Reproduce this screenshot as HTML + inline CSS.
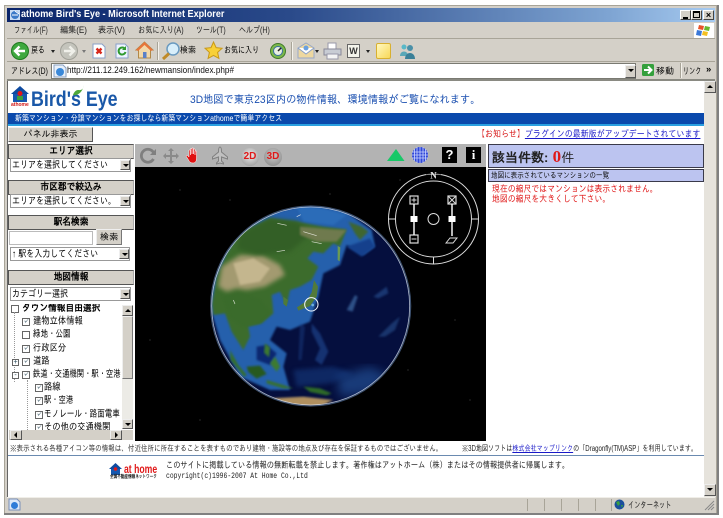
<!DOCTYPE html>
<html><head><meta charset="utf-8"><style>
html,body{margin:0;padding:0;width:723px;height:518px;overflow:hidden;background:#fff}
body{position:relative;font-family:"Liberation Sans","IPAGothic","Noto Sans CJK JP",sans-serif;font-size:10px;color:#000}
#w{position:absolute;left:0;top:0;width:723px;height:518px;overflow:hidden;filter:blur(.3px)}
.a,.t{position:absolute}
.t{white-space:nowrap;line-height:12px;transform-origin:0 0}
.h{position:absolute;left:8px;width:124px;height:13px;background:#d4d0c8;border:1px solid #555;border-right-color:#aaa;text-align:center;font-weight:bold;font-size:10px;line-height:13px;white-space:nowrap;overflow:hidden}
.h span{display:inline-block;transform:scaleX(.87)}
.s{position:absolute;left:10px;height:14px;background:#fff;border:1px solid #999;box-sizing:border-box;font-size:10px;line-height:12px;padding-left:1px;white-space:nowrap;overflow:hidden}
.s span{display:inline-block;transform:scaleX(.8);transform-origin:0 0;position:relative;top:1px}
.ar{position:absolute;width:11px;height:11px;background:#d4d0c8;border:1px solid;border-color:#eee #555 #555 #eee;box-sizing:border-box}
.ar:after{content:"";position:absolute;left:2px;top:3px;border-left:3px solid transparent;border-right:3px solid transparent;border-top:3px solid #000}
.up:after{border-top:0;border-bottom:3px solid #000}
.cb{position:absolute;width:6px;height:6px;border:1px solid #666;background:#fff;font-size:7px;line-height:6px;text-align:center;color:#245;overflow:hidden}
.tr{position:absolute;font-size:10px;line-height:12px;white-space:nowrap;transform:scaleX(.83);transform-origin:0 0}
.sep{position:absolute;width:1px;background:#a8a498;border-right:1px solid #f4f2ec}
</style></head><body><div id="w">

<!-- window frame -->
<div class="a" style="left:4px;top:5px;width:713px;height:509px;background:#d4d0c8;border:1px solid #a8a498;box-sizing:border-box"></div>
<div class="a" style="left:717px;top:5px;width:2px;height:509px;background:#808080"></div>
<div class="a" style="left:4px;top:513px;width:715px;height:2px;background:#808080"></div>

<!-- title bar -->
<div class="a" style="left:7px;top:8px;width:708px;height:14px;background:linear-gradient(90deg,#0a246a 0%,#2a4a8a 40%,#7ea4d2 85%,#a6caf0 100%)"></div>
<svg class="a" style="left:9px;top:9px" width="12" height="12" viewBox="0 0 12 12"><rect x="1" y="1" width="10" height="10" fill="#c8dcf4"/><circle cx="6" cy="6" r="4" fill="#3a7ac8"/><path d="M3 6h6M6 2l4 3" stroke="#fff" fill="none"/></svg>
<div class="t" style="left:21px;top:9px;color:#fff;font-weight:bold;font-size:10px;transform:scaleX(.91)">athome Bird's Eye - Microsoft Internet Explorer</div>
<div class="a" style="left:680px;top:10px;width:11px;height:10px;background:#d4d0c8;border:1px solid;border-color:#fff #444 #444 #fff;box-sizing:border-box"><div class="a" style="left:2px;top:6px;width:5px;height:2px;background:#000"></div></div>
<div class="a" style="left:691px;top:10px;width:11px;height:10px;background:#d4d0c8;border:1px solid;border-color:#fff #444 #444 #fff;box-sizing:border-box"><div class="a" style="left:1px;top:0;width:5px;height:4px;border:1px solid #000;border-top-width:2px"></div></div>
<div class="a" style="left:703px;top:10px;width:11px;height:10px;background:#d4d0c8;border:1px solid;border-color:#fff #444 #444 #fff;box-sizing:border-box;font-size:9px;line-height:8px;text-align:center;font-weight:bold">×</div>

<!-- menu -->
<div class="t" style="left:14px;top:24px;font-size:9px;color:#222;transform:scaleX(.71)">ファイル(F)</div>
<div class="t" style="left:60px;top:24px;font-size:9px;color:#222;transform:scaleX(.9)">編集(E)</div>
<div class="t" style="left:98px;top:24px;font-size:9px;color:#222;transform:scaleX(.9)">表示(V)</div>
<div class="t" style="left:138px;top:24px;font-size:9px;color:#222;transform:scaleX(.8)">お気に入り(A)</div>
<div class="t" style="left:196px;top:24px;font-size:9px;color:#222;transform:scaleX(.77)">ツール(T)</div>
<div class="t" style="left:239px;top:24px;font-size:9px;color:#222;transform:scaleX(.78)">ヘルプ(H)</div>
<div class="a" style="left:7px;top:38px;width:708px;height:1px;background:#a8a498"></div>
<div class="a" style="left:694px;top:23px;width:20px;height:15px;background:#fff"></div>
<svg class="a" style="left:696px;top:24px" width="15" height="13" viewBox="0 0 15 13"><path d="M3 1l5 1-1 4-5-1z" fill="#e8542a"/><path d="M9 2l5 1-1 4-5-1z" fill="#6ab82e"/><path d="M1 6l5 1-1 5-5-1z" fill="#3a78d8"/><path d="M7 7l5 1-1 4-5-1z" fill="#f4c020"/></svg>

<!-- toolbar -->
<svg class="a" style="left:10px;top:41px" width="20" height="20" viewBox="0 0 20 20"><circle cx="10" cy="10" r="8.500" fill="#3fa83f" stroke="#1f7a1f"/><path d="M15 10H6M9.500 5.500L5 10l4.500 4.500" stroke="#fff" stroke-width="2.400" fill="none"/></svg>
<div class="t" style="left:31px;top:44px;font-size:9px;transform:scaleX(.77)">戻る</div>
<div class="a" style="left:51px;top:50px;border-left:2px solid transparent;border-right:2px solid transparent;border-top:3px solid #222"></div>
<svg class="a" style="left:59px;top:41px" width="20" height="20" viewBox="0 0 20 20"><circle cx="10" cy="10" r="8.500" fill="#c4c4bc" stroke="#a0a098"/><path d="M5 10h9M10.500 5.500L15 10l-4.500 4.500" stroke="#f0f0ea" stroke-width="2.400" fill="none"/></svg>
<div class="a" style="left:82px;top:50px;border-left:2px solid transparent;border-right:2px solid transparent;border-top:3px solid #777"></div>
<svg class="a" style="left:91px;top:43px" width="16" height="16" viewBox="0 0 16 16"><path d="M2 1h9l3 3v11H2z" fill="#fff" stroke="#8aa0c8"/><path d="M5.500 5.500l5 5M10.500 5.500l-5 5" stroke="#d8281c" stroke-width="2.400"/></svg>
<svg class="a" style="left:114px;top:43px" width="16" height="16" viewBox="0 0 16 16"><path d="M2 1h9l3 3v11H2z" fill="#eef4ff" stroke="#8aa0c8"/><path d="M11 6a3.500 3.500 0 1 0 .5 3" stroke="#2f9a2f" stroke-width="2" fill="none"/><path d="M12 3v4H8z" fill="#2f9a2f"/></svg>
<svg class="a" style="left:135px;top:41px" width="19" height="19" viewBox="0 0 19 19"><path d="M9.500 1L1 9h2.500v8h12V9H18z" fill="#f2d8a8" stroke="#b08848"/><path d="M9.500 1L1 9l2 1 6.500-6 6.500 6 2-1z" fill="#e8743a"/><rect x="8" y="11" width="3.500" height="6" fill="#5a80c8"/></svg>
<div class="sep" style="left:157px;top:42px;height:18px"></div>
<svg class="a" style="left:161px;top:41px" width="20" height="20" viewBox="0 0 20 20"><circle cx="12" cy="8" r="6" fill="#d8eefa" stroke="#6a9ac0" stroke-width="1.500"/><path d="M8 12.500L2 18" stroke="#c08a28" stroke-width="3"/></svg>
<div class="t" style="left:180px;top:44px;font-size:9px;transform:scaleX(.88)">検索</div>
<svg class="a" style="left:204px;top:41px" width="19" height="19" viewBox="0 0 19 19"><path d="M9.500 1l2.600 5.600 6 .7-4.500 4.100 1.300 6L9.500 14.400 4.100 17.400l1.300-6L1 7.300l6-.7z" fill="#f8d038" stroke="#c89818"/></svg>
<div class="t" style="left:224px;top:44px;font-size:9px;transform:scaleX(.78)">お気に入り</div>
<svg class="a" style="left:269px;top:42px" width="18" height="18" viewBox="0 0 18 18"><circle cx="9" cy="9" r="7.500" fill="#7cb84a" stroke="#3f7a2a"/><circle cx="9" cy="9" r="4.500" fill="#e8f0e0" stroke="#3b6ca8"/><path d="M9 9l3-3" stroke="#222" stroke-width="1.500"/></svg>
<div class="sep" style="left:291px;top:42px;height:18px"></div>
<svg class="a" style="left:297px;top:42px" width="18" height="17" viewBox="0 0 18 17"><path d="M1 6l8-5 8 5v10H1z" fill="#eed8a0" stroke="#98a8c8"/><path d="M1 6l8 6 8-6" fill="#fff" stroke="#88a0c8"/><circle cx="9" cy="6" r="2.500" fill="#6aa0e0"/></svg>
<div class="a" style="left:315px;top:50px;border-left:2px solid transparent;border-right:2px solid transparent;border-top:3px solid #222"></div>
<svg class="a" style="left:323px;top:42px" width="19" height="18" viewBox="0 0 19 18"><path d="M5 1h8v6H5z" fill="#fff" stroke="#99a"/><path d="M1 7h17v6H1z" fill="#c8ccd4" stroke="#889"/><path d="M4 12h11v5H4z" fill="#f4f4f4" stroke="#99a"/></svg>
<div class="a" style="left:347px;top:44px;width:13px;height:14px;background:#f4f4ec;border:1px solid #666;box-sizing:border-box;font-size:9px;line-height:12px;text-align:center;font-weight:bold;color:#333">W</div>
<div class="a" style="left:366px;top:50px;border-left:2px solid transparent;border-right:2px solid transparent;border-top:3px solid #222"></div>
<div class="a" style="left:376px;top:43px;width:15px;height:16px;background:linear-gradient(135deg,#fff8c0,#f8d858);border:1px solid #d8b030;border-radius:2px;box-sizing:border-box"></div>
<svg class="a" style="left:398px;top:42px" width="18" height="18" viewBox="0 0 18 18"><circle cx="6" cy="5" r="2.500" fill="#58b8c8"/><path d="M2 14c0-6 8-6 8 0z" fill="#58a8b8"/><circle cx="12" cy="6" r="3" fill="#4a90a8"/><path d="M7 17c0-8 10-8 10 0z" fill="#3a8098"/></svg>
<div class="a" style="left:7px;top:61px;width:708px;height:1px;background:#a8a498"></div>

<!-- address bar -->
<div class="t" style="left:11px;top:65px;font-size:9px;transform:scaleX(.76)">アドレス(D)</div>
<div class="a" style="left:51px;top:63px;width:585px;height:16px;background:#fff;border:1px solid #7a7a72;box-sizing:border-box"></div>
<svg class="a" style="left:53px;top:64px" width="14" height="14" viewBox="0 0 14 14"><path d="M1 1h9l3 3v9H1z" fill="#e8f0fa" stroke="#8aa0c0"/><circle cx="7" cy="8" r="4" fill="#3a88d8"/></svg>
<div class="t" style="left:67px;top:65px;font-size:9.500px;color:#111;transform:scaleX(.86)">http://211.12.249.162/newmansion/index.php#</div>
<div class="ar" style="left:625px;top:65px;width:11px;height:13px"></div>
<svg class="a" style="left:641px;top:63px" width="14" height="14" viewBox="0 0 14 14"><rect x="1" y="1" width="12" height="12" rx="1.500" fill="#34a03c"/><path d="M3 7h7M7 3.500L10.500 7 7 10.500" stroke="#fff" stroke-width="2" fill="none"/></svg>
<div class="t" style="left:656px;top:65px;font-size:9px">移動</div>
<div class="sep" style="left:680px;top:63px;height:15px"></div>
<div class="t" style="left:683px;top:65px;font-size:9px;transform:scaleX(.68)">リンク</div>
<div class="t" style="left:706px;top:64px;font-size:9.500px;font-weight:bold">»</div>
<div class="a" style="left:7px;top:79px;width:708px;height:2px;background:#8a8a82"></div>

<!-- content -->
<div class="a" style="left:7px;top:81px;width:697px;height:416px;background:#fff"></div>
<div class="a" style="left:7px;top:81px;width:1px;height:416px;background:#666"></div>

<!-- vertical scrollbar -->
<div class="a" style="left:704px;top:81px;width:12px;height:416px;background:#e6e3dc"></div>
<div class="ar up" style="left:704px;top:81px;width:12px;height:12px"></div>
<div class="ar" style="left:704px;top:484px;width:12px;height:12px"></div>

<!-- logo -->
<svg class="a" style="left:11px;top:86px" width="18" height="22" viewBox="0 0 18 22"><path d="M9 0L0 8h18z" fill="#0e4aa0"/><rect x="2" y="8" width="14" height="8" fill="#1558b0"/><circle cx="9" cy="7.500" r="2.500" fill="#e01818"/><rect x="6" y="10" width="6" height="4" fill="#3ca03c"/><rect x="0" y="16" width="18" height="5" fill="#fff"/></svg>
<div class="t" style="left:11px;top:103px;font-size:5px;line-height:5px;font-weight:bold;color:#d01818">athome</div>
<div class="t" style="left:31px;top:88px;font-size:21px;line-height:24px;font-weight:bold;color:#1a58a8;transform:scaleX(.85)">Bird's Eye</div>
<svg class="a" style="left:72px;top:83px" width="14" height="14" viewBox="0 0 14 14"><path d="M1 12c3 1 9-1 11-10-1 6-4 5-6 5-2 0-4 2-5 5z" fill="#4fa83a"/></svg>
<div class="t" style="left:190px;top:94px;font-size:11px;color:#1a4fb0;transform:scaleX(.93)">3D地図で東京23区内の物件情報、環境情報がご覧になれます。</div>

<div class="a" style="left:8px;top:113px;width:696px;height:11px;background:#0a49ac"></div>
<div class="a" style="left:8px;top:124px;width:696px;height:2px;background:#2aa0e0"></div>
<div class="t" style="left:15px;top:113px;font-size:8.500px;line-height:11px;color:#fff;transform:scaleX(.82)">新築マンション・分譲マンションをお探しなら新築マンションathomeで簡単アクセス</div>

<!-- panel button -->
<div class="a" style="left:8px;top:127px;width:85px;height:15px;background:#d4d0c8;border:1px solid;border-color:#eee #555 #555 #eee;box-sizing:border-box;text-align:center;font-size:9px;line-height:13px">パネル非表示</div>

<!-- notice -->
<div class="t" style="left:477px;top:129px;font-size:9.500px;color:#d81818;transform:scaleX(.84)">【お知らせ】<span style="color:#1a1ac8;text-decoration:underline">プラグインの最新版がアップデートされています</span></div>

<!-- left panel -->
<div class="h" style="top:144px"><span>エリア選択</span></div>
<div class="s" style="top:158px;width:121px"><span>エリアを選択してください</span></div><div class="ar" style="left:120px;top:160px;width:10px;height:10px"></div>
<div class="h" style="top:180px"><span>市区郡で絞込み</span></div>
<div class="s" style="top:194px;width:121px"><span>エリアを選択してください。</span></div><div class="ar" style="left:120px;top:196px;width:10px;height:10px"></div>
<div class="h" style="top:215px"><span>駅名検索</span></div>
<div class="a" style="left:9px;top:231px;width:84px;height:14px;background:#fff;border:1px solid #bbb;box-sizing:border-box"></div>
<div class="a" style="left:96px;top:229px;width:26px;height:16px;background:#d4d0c8;border:1px solid;border-color:#eee #777 #777 #eee;box-sizing:border-box;text-align:center;font-size:9px;line-height:14px">検索</div>
<div class="s" style="top:247px;width:120px"><span>↑ 駅を入力してください</span></div><div class="ar" style="left:119px;top:249px;width:10px;height:10px"></div>
<div class="h" style="top:270px"><span>地図情報</span></div>
<div class="s" style="top:287px;width:121px"><span>カテゴリー選択</span></div><div class="ar" style="left:120px;top:289px;width:10px;height:10px"></div>

<!-- tree -->
<div class="a" style="left:9px;top:304px;width:113px;height:126px;background:#fff;overflow:hidden">
 <div class="cb" style="left:2px;top:1px"></div><div class="tr" style="left:13px;top:-1px;font-weight:bold;transform:scaleX(.87)">タウン情報自由選択</div>
 <div class="a" style="left:5px;top:8px;width:1px;height:70px;border-left:1px dotted #999"></div>
 <div class="cb" style="left:13px;top:14px">✓</div><div class="tr" style="left:24px;top:12px">建物立体情報</div>
 <div class="cb" style="left:13px;top:27px"></div><div class="tr" style="left:24px;top:25px;transform:scaleX(.75)">緑地・公園</div>
 <div class="cb" style="left:13px;top:41px">✓</div><div class="tr" style="left:24px;top:39px">行政区分</div>
 <div class="cb" style="left:3px;top:55px;width:5px;height:5px;line-height:5px;font-size:7px">+</div>
 <div class="cb" style="left:13px;top:54px">✓</div><div class="tr" style="left:24px;top:52px">道路</div>
 <div class="cb" style="left:3px;top:68px;width:5px;height:5px;line-height:5px;font-size:7px">-</div>
 <div class="cb" style="left:13px;top:67px">✓</div><div class="tr" style="left:24px;top:65px;transform:scaleX(.73)">鉄道・交通機関・駅・空港</div>
 <div class="a" style="left:18px;top:76px;width:1px;height:50px;border-left:1px dotted #999"></div>
 <div class="cb" style="left:26px;top:80px">✓</div><div class="tr" style="left:35px;top:78px">路線</div>
 <div class="cb" style="left:26px;top:93px">✓</div><div class="tr" style="left:35px;top:91px;transform:scaleX(.73)">駅・空港</div>
 <div class="cb" style="left:26px;top:107px">✓</div><div class="tr" style="left:35px;top:105px;transform:scaleX(.76)">モノレール・路面電車</div>
 <div class="cb" style="left:26px;top:120px">✓</div><div class="tr" style="left:35px;top:118px">その他の交通機関</div>
</div>
<div class="a" style="left:122px;top:305px;width:11px;height:124px;background:#ecebe6"></div>
<div class="ar up" style="left:122px;top:305px;width:11px;height:11px"></div>
<div class="a" style="left:122px;top:316px;width:11px;height:63px;background:#d4d0c8;border:1px solid;border-color:#eee #777 #777 #eee;box-sizing:border-box"></div>
<div class="ar" style="left:122px;top:419px;width:11px;height:10px"></div>
<div class="a" style="left:9px;top:430px;width:124px;height:10px;background:#d4d0c8"></div>
<div class="a" style="left:10px;top:430px;width:12px;height:10px;background:#d4d0c8;border:1px solid;border-color:#eee #555 #555 #eee;box-sizing:border-box"><div class="a" style="left:3px;top:1px;border-top:3px solid transparent;border-bottom:3px solid transparent;border-right:3px solid #000"></div></div>
<div class="a" style="left:110px;top:430px;width:12px;height:10px;background:#d4d0c8;border:1px solid;border-color:#eee #555 #555 #eee;box-sizing:border-box"><div class="a" style="left:4px;top:1px;border-top:3px solid transparent;border-bottom:3px solid transparent;border-left:3px solid #000"></div></div>

<!-- map toolbar -->
<div class="a" style="left:135px;top:144px;width:351px;height:23px;background:#b3b3b3"></div>
<svg class="a" style="left:138px;top:146px" width="125" height="20" viewBox="0 0 125 20">
 <path d="M15.500 13a6.500 6.500 0 1 1 0-6.500" stroke="#7f7f7f" stroke-width="2.800" fill="none"/><path d="M18 3v6h-6z" fill="#7f7f7f"/>
 <path d="M33 2l3 3h-2v4h4V7l3 3-3 3v-2h-4v4h2l-3 3-3-3h2v-4h-4v2l-3-3 3-3v2h4V5h-2z" fill="#8a8a8a"/>
 <path d="M55 17c-3 0-4-2-5-4l-2-3 1-1 2 2V4h1.500v5V2.500H54V8V2H55.500v6V3H57v6V5h1.500v7c0 3-1 5-3.500 5z" fill="#e01010" stroke="#fff" stroke-width=".5"/>
 <path d="M82 1c1 0 1.500 2 1.500 5l6 5v2l-6-2v4l2 2v1l-3.500-1-3.500 1v-1l2-2v-4l-6 2v-2l6-5c0-3 .5-5 1.500-5z" fill="#c0c0c0" stroke="#808080"/>
</svg>
<div class="a" style="left:241px;top:148px;width:18px;height:18px;border-radius:50%;background:radial-gradient(circle at 50% 40%,#eee,#8c8c8c);text-align:center;font-weight:bold;font-size:10px;line-height:18px;color:#e01818">2D</div>
<div class="a" style="left:264px;top:148px;width:18px;height:18px;border-radius:50%;background:radial-gradient(circle at 50% 40%,#ccc,#808080);text-align:center;font-weight:bold;font-size:10px;line-height:18px;color:#e01818">3D</div>
<svg class="a" style="left:386px;top:147px" width="20" height="16" viewBox="0 0 20 16"><path d="M10 2l8.500 12H1z" fill="#18c868"/></svg>
<svg class="a" style="left:411px;top:146px" width="18" height="18" viewBox="0 0 18 18"><circle cx="9" cy="9" r="8" fill="#2e46d8"/><path d="M1 6h16M1 9h16M1 12h16M6 1v16M9 1v16M12 1v16M3.500 3v12M14.500 3v12" stroke="#cfd8ff" stroke-width=".8"/></svg>
<div class="a" style="left:442px;top:147px;width:15px;height:16px;background:#000;color:#fff;font-weight:bold;font-size:13px;line-height:16px;text-align:center">?</div>
<div class="a" style="left:466px;top:147px;width:15px;height:16px;background:#000;color:#fff;font-weight:bold;font-size:13px;line-height:16px;text-align:center;font-family:'Liberation Serif',serif">i</div>

<!-- map -->
<div class="a" style="left:135px;top:167px;width:351px;height:274px;background:#000;overflow:hidden"></div>
<svg class="a" style="left:135px;top:167px" width="351" height="274" viewBox="135 167 351 274">
 <g fill="#666"><circle cx="330" cy="194" r=".5"/><circle cx="180" cy="190" r=".5"/><circle cx="150" cy="340" r=".5"/><circle cx="400" cy="180" r=".5"/><circle cx="455" cy="320" r=".5"/><circle cx="230" cy="200" r=".5"/><circle cx="200" cy="420" r=".5"/><circle cx="408" cy="370" r=".5"/><circle cx="470" cy="400" r=".5"/></g>
</svg>
<svg class="a" style="left:190px;top:190px" width="240" height="230" viewBox="0 0 720 690">
 <defs>
  <clipPath id="g"><circle cx="362" cy="348" r="298"/></clipPath>
  <filter id="b1" color-interpolation-filters="sRGB"><feGaussianBlur stdDeviation="3"/></filter>
  <filter id="b2" color-interpolation-filters="sRGB"><feGaussianBlur stdDeviation="7"/></filter>
  <filter id="b3" color-interpolation-filters="sRGB"><feGaussianBlur stdDeviation="14"/></filter>
 </defs>
 <circle cx="362" cy="348" r="298" fill="#050f3e"/>
 <g clip-path="url(#g)">
  <!-- shallow seas -->
  <path d="M60 350L70 250 130 130 240 70 340 45 460 60 545 120 555 170 520 195 470 165 450 225 400 250 385 320 360 395 300 420 260 410 240 450 290 490 280 530 300 600 240 600 150 560 90 450z" fill="#2560ac" filter="url(#b1)"/>
  <path d="M320 50l80 5 70 20-40 30-90-10z" fill="#2b6cb8" filter="url(#b1)"/>
  <path d="M470 170l70-25 15 25-40 30z" fill="#15408c" filter="url(#b1)"/>
  <path d="M200 470l30-5 30 25-20 35-40-15z" fill="#0c2870" filter="url(#b1)"/>
  <path d="M440 560l100-30 60 30-60 50-90 10z" fill="#2658a0" opacity=".6" filter="url(#b3)"/>
  <path d="M470 360l25-45 8 5-15 45z" fill="#4a7cb8" opacity=".6" filter="url(#b1)"/>
  <path d="M565 440l40-40 25-20-15 40-30 20z" fill="#2f5c9c" opacity=".5" filter="url(#b1)"/>
  <path d="M550 320l40-30 5 20-30 15z" fill="#2f5ea4" opacity=".5" filter="url(#b1)"/>
  <path d="M365 400l25 30 25 55-20 40-20-15 15-35-25-50z" fill="#234f9c" opacity=".55" filter="url(#b1)"/>
  <path d="M330 400l-5 110 10 0 10-100z" fill="#1e468f" opacity=".4" filter="url(#b1)"/>
  <path d="M310 540l120-10 60 20-70 30-100 10z" fill="#1b4791" opacity=".45" filter="url(#b2)"/>
  <!-- land -->
  <path d="M66 340L80 260 110 190 150 130 240 85 320 95 400 110 470 118 450 170 430 160 400 190 370 185 352 205 385 230 365 270 330 290 300 300 290 345 270 305 245 315 250 370 215 400 175 410 180 440 160 480 125 425 105 370 70 375z" fill="#3c6c2c" filter="url(#b1)"/>
  <path d="M85 290L95 230 150 195 215 195 270 225 285 255 225 290 170 300 140 295 110 305z" fill="#a39a70" filter="url(#b2)"/>
  <path d="M130 220l60-15 50 30-30 40-60 10z" fill="#c4b68e" filter="url(#b1)"/>
  <path d="M100 320l50-10 60 20 30 40-30 30-50 10-40-30z" fill="#3a6b2b" filter="url(#b1)"/>
  <path d="M150 130l90-45 80 10 50 30-70 60-100 10-60-20z" fill="#335f26" filter="url(#b2)"/>
  <path d="M330 110l100 8 40 2-30 35-60 0-50-20z" fill="#6f7a4e" filter="url(#b1)"/>
  <path d="M475 95l40 15 20 15-25 25-15-20z" fill="#3f6630" filter="url(#b1)"/>
  <path d="M443 168l8 4-2 42-6-4z" fill="#6c9a52"/>
  <path d="M372 270l12 20-4 30-20 28-35 14-4-10 30-20 14-25z" fill="#527a3a"/>
  <path d="M280 320l14 10-4 20-10-8z" fill="#4e7a38"/>
  <path d="M170 530l40-3 20 25-30 14-25-20z" fill="#27591f" filter="url(#b1)"/>
  <path d="M225 460l15 12-3 30-15-14z" fill="#3d7a30" filter="url(#b1)"/>
  <path d="M255 500l15 30-10 15-20-25z" fill="#3d7a30" filter="url(#b1)"/>
  <path d="M120 480l25 45 25 30-8 5-40-50z" fill="#356f2a" filter="url(#b1)"/>
  <path d="M340 590l50 5 35 15-15 6-50-10z" fill="#2e6a28" filter="url(#b1)"/>
  <path d="M240 625l100-5 90 10-50 25-100-10z" fill="#b09060" filter="url(#b1)"/>
  <path d="M230 570l50 15 30 10-30 0-50-15z" fill="#38702e" filter="url(#b1)"/>
  <g stroke="#f4f4ee" stroke-width="2" fill="none" opacity=".85">
   <path d="M262 100l28 6M320 80l12-6M340 125l40 12M365 155l30 6M260 185l25-4M130 330l5 12"/>
  </g>
 </g>
 <circle cx="362" cy="348" r="297" fill="none" stroke="#d8e0ee" stroke-width="2.500" opacity=".8"/>
 <circle cx="362" cy="348" r="300" fill="none" stroke="#5b7aa8" stroke-width="3.500" opacity=".65"/>
 <circle cx="364" cy="343" r="20" fill="none" stroke="#f4f8ff" stroke-width="3"/>
 <circle cx="368" cy="345" r="4" fill="#6fb0e0"/>
</svg>

<!-- compass -->
<svg class="a" style="left:385px;top:170px" width="100" height="95" viewBox="0 0 100 95">
 <g fill="none" stroke="#dcdcdc" stroke-width="1">
  <circle cx="48.500" cy="49" r="45"/><circle cx="48.500" cy="49" r="38"/>
  <path d="M3.500 49h7M86.500 49h7M48.500 87v7M42 4.500h13" />
  <circle cx="48.500" cy="49" r="5.500"/>
  <rect x="25" y="26" width="8" height="8" stroke-width="1.200"/><path d="M26.500 30h5M29 27.500v5"/>
  <rect x="25" y="65" width="8" height="8" stroke-width="1.200"/><path d="M26.500 69h5"/>
  <rect x="63" y="26" width="8" height="8" stroke-width="1.200"/><path d="M63 26l8 8M71 26l-8 8"/>
  <path d="M61 73l4-5h7l-4 5z"/>
 </g>
 <path d="M29 34v31M67 34v32" stroke="#f4f4f4" stroke-width="1.500"/>
 <rect x="25.500" y="46" width="7" height="6" fill="#fff"/><rect x="63.500" y="46" width="7" height="6" fill="#fff"/>
 <rect x="41" y="1" width="15" height="8" fill="#000" opacity=".4"/>
 <text x="48.500" y="8.500" font-size="9" font-weight="bold" fill="#e8e8e8" text-anchor="middle" font-family="Liberation Serif,serif">N</text>
</svg>

<!-- right panel -->
<div class="a" style="left:488px;top:144px;width:216px;height:24px;background:#bcc4f0;border:1px solid #3a3a4a;box-sizing:border-box"></div>
<div class="t" style="left:492px;top:148px;font-size:13px;line-height:17px;color:#222;font-weight:bold">該当件数:<span style="color:#e01818;font-size:17px;font-family:'Liberation Serif',serif"> 0</span><span style="font-weight:normal">件</span></div>
<div class="a" style="left:488px;top:169px;width:216px;height:13px;background:#bcc4f0;border:1px solid #3a3a4a;box-sizing:border-box"></div>
<div class="t" style="left:491px;top:169px;font-size:8px;line-height:13px;color:#111;transform:scaleX(.82)">地図に表示されているマンションの一覧</div>
<div class="t" style="left:492px;top:185px;font-size:9.500px;line-height:10px;color:#e01818;transform:scaleX(.83)">現在の縮尺ではマンションは表示されません。<br>地図の縮尺を大きくして下さい。</div>

<!-- notes -->
<div class="t" style="left:10px;top:443px;font-size:8.200px;line-height:11px;color:#333;transform:scaleX(.8)">※表示される各種アイコン等の情報は、付近住所に所在することを表すものであり建物・施設等の地点及び存在を保証するものではございません。</div>
<div class="t" style="left:462px;top:443px;font-size:8px;line-height:11px;color:#222;transform:scaleX(.76)">※3D地図ソフトは<span style="color:#1a1ac8;text-decoration:underline">株式会社マップリンク</span>の「Dragonfly(TM)ASP」を利用しています。</div>
<div class="a" style="left:8px;top:455px;width:696px;height:1px;background:#6a8ab0"></div>

<!-- footer -->
<svg class="a" style="left:109px;top:463px" width="13" height="13" viewBox="0 0 13 13"><path d="M6.500 0L0 6h13z" fill="#0e4aa0"/><rect x="2" y="6" width="9" height="6" fill="#1558b0"/><circle cx="6.500" cy="6" r="1.800" fill="#e01818"/></svg>
<div class="t" style="left:124px;top:463px;font-size:12px;line-height:13px;font-weight:bold;color:#e01818;transform:scaleX(.72)">at home</div>
<div class="t" style="left:110px;top:474px;font-size:5px;line-height:6px;font-weight:bold;color:#222;transform:scaleX(.72)">全国不動産情報ネットワーク</div>
<div class="t" style="left:166px;top:459px;font-size:9px;line-height:12px;color:#222;transform:scaleX(.8)">このサイトに掲載している情報の無断転載を禁止します。著作権はアットホーム（株）またはその情報提供者に帰属します。</div>
<div class="t" style="left:166px;top:470px;font-size:8.200px;line-height:13px;color:#222;font-family:'Liberation Mono',monospace;transform:scaleX(.78)">copyright(c)1996-2007 At Home Co.,Ltd</div>

<!-- status bar -->
<div class="a" style="left:7px;top:497px;width:708px;height:15px;background:#d4d0c8;border-top:1px solid #f0eee8;box-sizing:border-box"></div>
<svg class="a" style="left:8px;top:498px" width="13" height="13" viewBox="0 0 13 13"><path d="M1 1h8l3 3v8H1z" fill="#dce8f8" stroke="#7a90b8"/><circle cx="6.500" cy="7.500" r="3.500" fill="#2f7cd8"/></svg>
<div class="a" style="left:527px;top:499px;width:1px;height:12px;background:#a8a498"></div>
<div class="a" style="left:544px;top:499px;width:1px;height:12px;background:#a8a498"></div>
<div class="a" style="left:561px;top:499px;width:1px;height:12px;background:#a8a498"></div>
<div class="a" style="left:578px;top:499px;width:1px;height:12px;background:#a8a498"></div>
<div class="a" style="left:595px;top:499px;width:1px;height:12px;background:#a8a498"></div>
<div class="a" style="left:611px;top:499px;width:1px;height:12px;background:#a8a498"></div>
<svg class="a" style="left:614px;top:499px" width="11" height="11" viewBox="0 0 11 11"><circle cx="5.500" cy="5.500" r="5" fill="#1a4f9c"/><path d="M2 3l3-1 1 3-2 2zM7 6l2 0-1 3z" fill="#3aa040"/></svg>
<div class="t" style="left:628px;top:499px;font-size:9px;color:#222;transform:scaleX(.69)">インターネット</div>
<svg class="a" style="left:704px;top:500px" width="11" height="11" viewBox="0 0 11 11"><path d="M10 1L1 10M10 4l-6 6M10 7l-3 3" stroke="#888"/></svg>
</div></body></html>
